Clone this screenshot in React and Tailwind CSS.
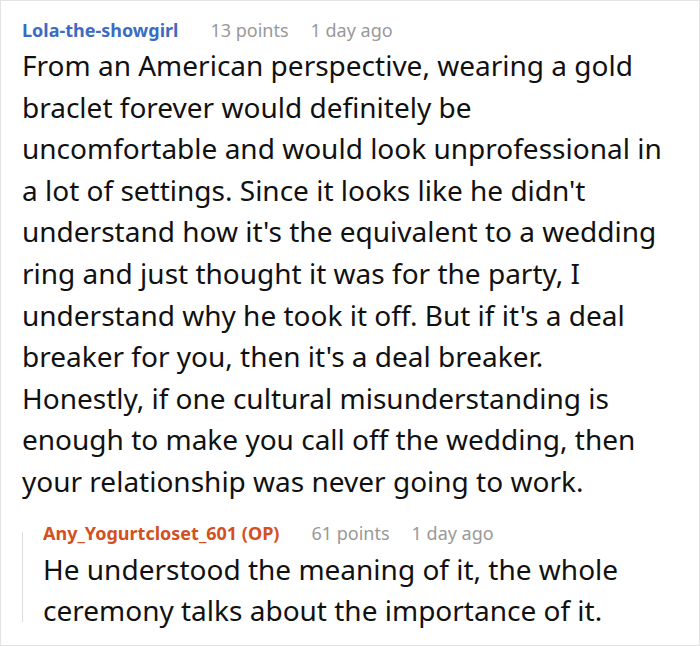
const font = { fontFamily: '"Noto Sans", "Open Sans", sans-serif' }

function Meta({ name, nameClass, points, age }) {
  return (
    <div className="flex items-baseline text-[18px] leading-[26px]">
      <span className={`font-bold ${nameClass}`}>{name}</span>
      <span className="ml-[32px] text-[#999999]">{points}</span>
      <span className="ml-[22px] text-[#999999]">{age}</span>
    </div>
  )
}

export default function App() {
  return (
    <div
      className="w-[700px] h-[646px] bg-white border border-[#e3e3e3] pt-[16px] pl-[21px] pr-[36px] overflow-hidden"
      style={font}
    >
      <Meta name="Lola-the-showgirl" nameClass="text-[#3b6cc2]" points="13 points" age="1 day ago" />
      <p className="mt-[2px] text-[28px] leading-[41.6px] text-[#111111]">
        From an American perspective, wearing a gold braclet forever would definitely be uncomfortable and would look unprofessional in a lot of settings. Since it looks like he didn't understand how it's the equivalent to a wedding ring and just thought it was for the party, I understand why he took it off. But if it's a deal breaker for you, then it's a deal breaker. Honestly, if one cultural misunderstanding is enough to make you call off the wedding, then your relationship was never going to work.
      </p>
      <div className="mt-[17px] flex">
        <div className="w-px bg-[#dddddd] mt-[12px] mb-[10px] shrink-0" />
        <div className="pl-[20px]">
          <Meta name="Any_Yogurtcloset_601 (OP)" nameClass="text-[#d4501f]" points="61 points" age="1 day ago" />
          <p className="mt-[3px] text-[28px] leading-[41.6px] text-[#111111]">
            He understood the meaning of it, the whole ceremony talks about the importance of it.
          </p>
        </div>
      </div>
    </div>
  )
}
